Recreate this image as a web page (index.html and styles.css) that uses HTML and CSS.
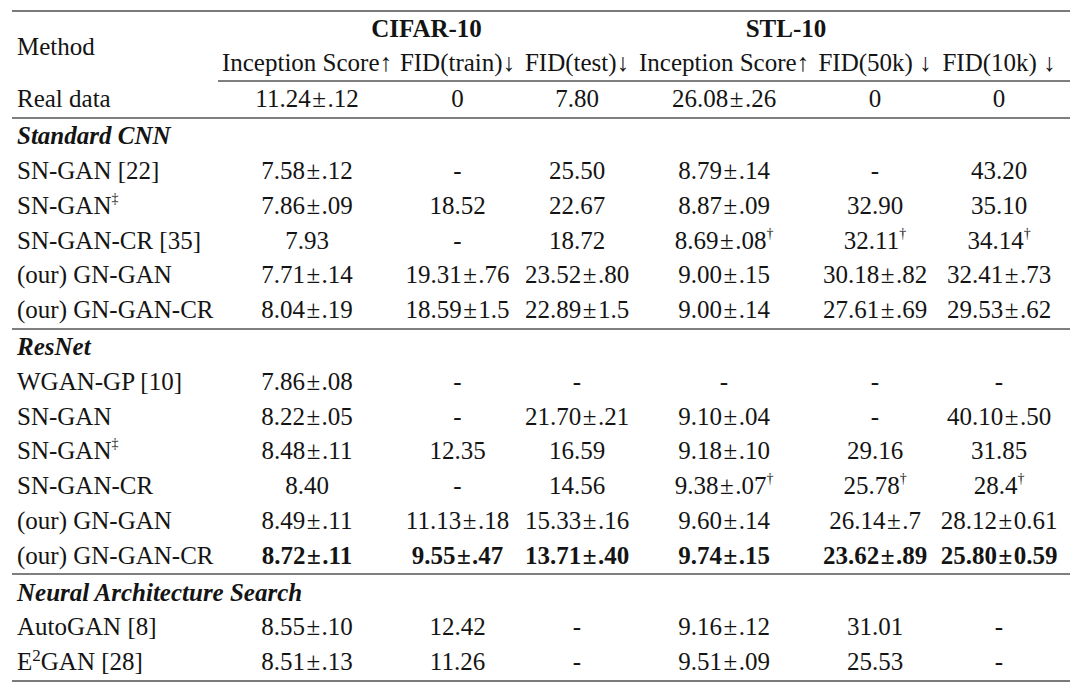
FILE: index.html
```html
<!DOCTYPE html>
<html>
<head>
<meta charset="utf-8">
<link rel="stylesheet" href="styles.css">
</head>
<body>
<table class="results">
  <colgroup>
    <col class="c-method">
    <col class="c-is">
    <col class="c-train">
    <col class="c-test">
    <col class="c-is">
    <col class="c-50k">
    <col class="c-10k">
  </colgroup>
  <thead>
    <tr class="head1">
      <th class="method" rowspan="2">Method</th>
      <th class="ds" colspan="3">CIFAR-10</th>
      <th class="ds" colspan="2">STL-10</th>
      <th></th>
    </tr>
    <tr class="head2 rule">
      <th>Inception Score↑</th>
      <th>FID(train)↓</th>
      <th>FID(test)↓</th>
      <th>Inception Score↑</th>
      <th>FID(50k) ↓</th>
      <th class="last">FID(10k) ↓</th>
    </tr>
  </thead>
  <tbody>
    <tr class="rule">
      <td class="method">Real data</td><td>11.24<span class="pm">±</span>.12</td><td>0</td><td>7.80</td><td>26.08<span class="pm">±</span>.26</td><td>0</td><td class="last">0</td>
    </tr>
    <tr class="section"><td colspan="7">Standard CNN</td></tr>
    <tr><td class="method">SN-GAN [22]</td><td>7.58<span class="pm">±</span>.12</td><td>-</td><td>25.50</td><td>8.79<span class="pm">±</span>.14</td><td>-</td><td class="last">43.20</td></tr>
    <tr><td class="method">SN-GAN<sup>‡</sup></td><td>7.86<span class="pm">±</span>.09</td><td>18.52</td><td>22.67</td><td>8.87<span class="pm">±</span>.09</td><td>32.90</td><td class="last">35.10</td></tr>
    <tr><td class="method">SN-GAN-CR [35]</td><td>7.93</td><td>-</td><td>18.72</td><td>8.69<span class="pm">±</span>.08<sup>†</sup></td><td>32.11<sup>†</sup></td><td class="last">34.14<sup>†</sup></td></tr>
    <tr><td class="method">(our) GN-GAN</td><td>7.71<span class="pm">±</span>.14</td><td>19.31<span class="pm">±</span>.76</td><td>23.52<span class="pm">±</span>.80</td><td>9.00<span class="pm">±</span>.15</td><td>30.18<span class="pm">±</span>.82</td><td class="last">32.41<span class="pm">±</span>.73</td></tr>
    <tr class="rule"><td class="method">(our) GN-GAN-CR</td><td>8.04<span class="pm">±</span>.19</td><td>18.59<span class="pm">±</span>1.5</td><td>22.89<span class="pm">±</span>1.5</td><td>9.00<span class="pm">±</span>.14</td><td>27.61<span class="pm">±</span>.69</td><td class="last">29.53<span class="pm">±</span>.62</td></tr>
    <tr class="section"><td colspan="7">ResNet</td></tr>
    <tr><td class="method">WGAN-GP [10]</td><td>7.86<span class="pm">±</span>.08</td><td>-</td><td>-</td><td>-</td><td>-</td><td class="last">-</td></tr>
    <tr><td class="method">SN-GAN</td><td>8.22<span class="pm">±</span>.05</td><td>-</td><td>21.70<span class="pm">±</span>.21</td><td>9.10<span class="pm">±</span>.04</td><td>-</td><td class="last">40.10<span class="pm">±</span>.50</td></tr>
    <tr><td class="method">SN-GAN<sup>‡</sup></td><td>8.48<span class="pm">±</span>.11</td><td>12.35</td><td>16.59</td><td>9.18<span class="pm">±</span>.10</td><td>29.16</td><td class="last">31.85</td></tr>
    <tr><td class="method">SN-GAN-CR</td><td>8.40</td><td>-</td><td>14.56</td><td>9.38<span class="pm">±</span>.07<sup>†</sup></td><td>25.78<sup>†</sup></td><td class="last">28.4<sup>†</sup></td></tr>
    <tr><td class="method">(our) GN-GAN</td><td>8.49<span class="pm">±</span>.11</td><td>11.13<span class="pm">±</span>.18</td><td>15.33<span class="pm">±</span>.16</td><td>9.60<span class="pm">±</span>.14</td><td>26.14<span class="pm">±</span>.7</td><td class="last">28.12<span class="pm">±</span>0.61</td></tr>
    <tr class="rule best"><td class="method">(our) GN-GAN-CR</td><td>8.72<span class="pm">±</span>.11</td><td>9.55<span class="pm">±</span>.47</td><td>13.71<span class="pm">±</span>.40</td><td>9.74<span class="pm">±</span>.15</td><td>23.62<span class="pm">±</span>.89</td><td class="last">25.80<span class="pm">±</span>0.59</td></tr>
    <tr class="section"><td colspan="7">Neural Architecture Search</td></tr>
    <tr><td class="method">AutoGAN [8]</td><td>8.55<span class="pm">±</span>.10</td><td>12.42</td><td>-</td><td>9.16<span class="pm">±</span>.12</td><td>31.01</td><td class="last">-</td></tr>
    <tr class="bottom"><td class="method">E<sup class="pow">2</sup>GAN [28]</td><td>8.51<span class="pm">±</span>.13</td><td>11.26</td><td>-</td><td>9.51<span class="pm">±</span>.09</td><td>25.53</td><td class="last">-</td></tr>
  </tbody>
</table>
</body>
</html>
```

FILE: styles.css
```css
html, body {
  margin: 0;
  padding: 0;
  background: #ffffff;
}

body {
  font-family: "Liberation Serif", "Times New Roman", serif;
  font-size: 25px;
  color: #141414;
}

.results {
  margin: 10px 0 0 12px;
  border-collapse: collapse;
  table-layout: fixed;
  width: 1058px;
  border-top: 2px solid #7a7a7a;
}

.c-method { width: 206px; }
.c-is { width: 178px; }
.c-train { width: 123px; }
.c-test { width: 116px; }
.c-50k { width: 124px; }
.c-10k { width: 133px; }

.results th,
.results td {
  padding: 0;
  text-align: center;
  white-space: nowrap;
  font-weight: normal;
  line-height: 26px;
}

.results td.last,
.results th.last {
  padding-right: 9px;
}

.head1 th,
.head2 th {
  height: 34px;
}

.results .ds {
  font-weight: bold;
}

.results .method {
  text-align: left;
  padding-left: 5px;
  vertical-align: middle;
}

.results tbody tr {
  height: 34.8px;
}

.results td {
  height: 34.8px;
}

.rule th,
.rule td {
  border-bottom: 2px solid #7f7f7f;
}

.bottom td {
  border-bottom: 2px solid #7a7a7a;
}

.section td {
  text-align: left;
  padding-left: 5px;
  font-weight: bold;
  font-style: italic;
}

.best td:not(.method) {
  font-weight: bold;
}

.pm {
  margin: 0 1.5px;
}

sup {
  font-size: 14px;
  line-height: 0;
  vertical-align: 11px;
}

sup.pow {
  font-size: 17px;
  vertical-align: 9px;
}
```
